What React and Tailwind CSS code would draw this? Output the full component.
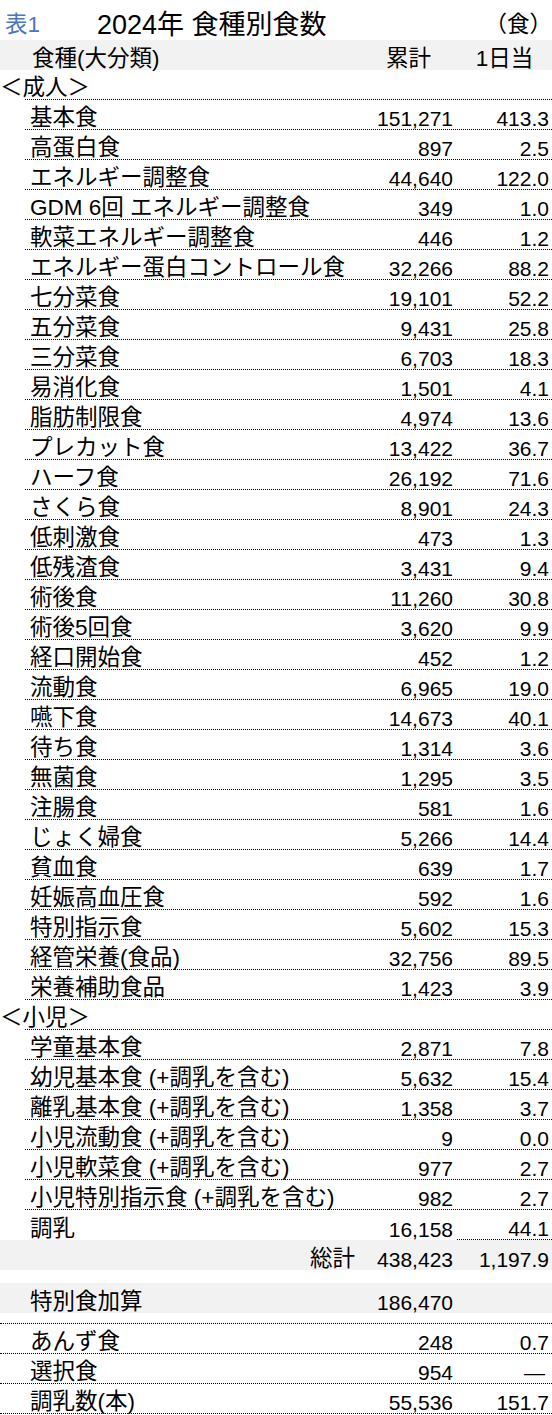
import React from 'react';

const adult = [
  ['基本食', '151,271', '413.3'],
  ['高蛋白食', '897', '2.5'],
  ['エネルギー調整食', '44,640', '122.0'],
  ['GDM 6回 エネルギー調整食', '349', '1.0'],
  ['軟菜エネルギー調整食', '446', '1.2'],
  ['エネルギー蛋白コントロール食', '32,266', '88.2'],
  ['七分菜食', '19,101', '52.2'],
  ['五分菜食', '9,431', '25.8'],
  ['三分菜食', '6,703', '18.3'],
  ['易消化食', '1,501', '4.1'],
  ['脂肪制限食', '4,974', '13.6'],
  ['プレカット食', '13,422', '36.7'],
  ['ハーフ食', '26,192', '71.6'],
  ['さくら食', '8,901', '24.3'],
  ['低刺激食', '473', '1.3'],
  ['低残渣食', '3,431', '9.4'],
  ['術後食', '11,260', '30.8'],
  ['術後5回食', '3,620', '9.9'],
  ['経口開始食', '452', '1.2'],
  ['流動食', '6,965', '19.0'],
  ['嚥下食', '14,673', '40.1'],
  ['待ち食', '1,314', '3.6'],
  ['無菌食', '1,295', '3.5'],
  ['注腸食', '581', '1.6'],
  ['じょく婦食', '5,266', '14.4'],
  ['貧血食', '639', '1.7'],
  ['妊娠高血圧食', '592', '1.6'],
  ['特別指示食', '5,602', '15.3'],
  ['経管栄養(食品)', '32,756', '89.5'],
  ['栄養補助食品', '1,423', '3.9'],
];

const child = [
  ['学童基本食', '2,871', '7.8'],
  ['幼児基本食 (+調乳を含む)', '5,632', '15.4'],
  ['離乳基本食 (+調乳を含む)', '1,358', '3.7'],
  ['小児流動食 (+調乳を含む)', '9', '0.0'],
  ['小児軟菜食 (+調乳を含む)', '977', '2.7'],
  ['小児特別指示食 (+調乳を含む)', '982', '2.7'],
];

const extra = [
  ['あんず食', '248', '0.7'],
  ['選択食', '954', '—'],
  ['調乳数(本)', '55,536', '151.7'],
];

function Row({ name, total, perDay, indent = true }) {
  return (
    <div
      className={`flex h-[30px] items-center border-b border-dotted border-black pt-[8px] ${indent ? 'ml-[25px] pl-[5px]' : 'pl-[30px]'}`}
    >
      <div className="flex-1 text-[22.5px] leading-none">{name}</div>
      <div className="w-[97px] pr-[4px] text-right text-[21px] leading-none">{total}</div>
      <div className={`w-[95px] text-right text-[21px] leading-none ${perDay === '—' ? 'pr-[7px]' : 'pr-[3px]'}`}>
        {perDay}
      </div>
    </div>
  );
}

function Section({ label }) {
  return (
    <div className="ml-[25px] flex h-[30px] items-center border-b border-dotted border-black pt-[8px]">
      <div className="-ml-[25px] text-[22.5px] leading-none">{label}</div>
    </div>
  );
}

export default function App() {
  return (
    <div className="w-[552px] bg-white text-black font-['Liberation_Sans','Noto_Sans_CJK_JP',sans-serif]">
      <div className="flex h-[40px] items-center pt-[11px]">
        <div className="w-[97px] pl-[5px] text-[22.5px] leading-none text-[#4a76c0]">表1</div>
        <div className="flex-1 text-[27px] leading-none">2024年 食種別食数</div>
        <div className="text-[22.5px] leading-none">（食）</div>
      </div>

      <div className="flex h-[30px] items-center bg-[#f2f2f2] pt-[8px]">
        <div className="flex-1 pl-[32px] text-[22.5px] leading-none">食種(大分類)</div>
        <div className="w-[97px] text-center text-[22.5px] leading-none">累計</div>
        <div className="w-[95px] text-center text-[22.5px] leading-none">1日当</div>
      </div>

      <Section label="＜成人＞" />
      {adult.map(([n, t, d]) => (
        <Row key={n} name={n} total={t} perDay={d} />
      ))}

      <Section label="＜小児＞" />
      {child.map(([n, t, d]) => (
        <Row key={n} name={n} total={t} perDay={d} />
      ))}
      <div className="ml-[25px] flex h-[30px] pl-[5px]">
        <div className="flex flex-1 items-center pt-[8px] text-[22.5px] leading-none">調乳</div>
        <div className="flex w-[97px] items-center justify-end pr-[4px] pt-[8px] text-[21px] leading-none">16,158</div>
        <div className="flex w-[95px] items-center justify-end border-b border-dotted border-black pr-[3px] pt-[8px] text-[21px] leading-none">
          44.1
        </div>
      </div>

      <div className="flex h-[30px] items-center bg-[#f2f2f2] pt-[8px]">
        <div className="flex-1 pr-[5px] text-right text-[22.5px] leading-none">総計</div>
        <div className="w-[97px] pr-[4px] text-right text-[21px] leading-none">438,423</div>
        <div className="w-[95px] pr-[3px] text-right text-[21px] leading-none">1,197.9</div>
      </div>

      <div className="h-[13px]" />
      <div className="flex h-[30px] items-center bg-[#f2f2f2] pt-[8px]">
        <div className="flex-1 pl-[30px] text-[22.5px] leading-none">特別食加算</div>
        <div className="w-[97px] pr-[4px] text-right text-[21px] leading-none">186,470</div>
        <div className="w-[95px]" />
      </div>

      <div className="h-[10px]" />
      <div className="border-t border-dotted border-black">
        {extra.map(([n, t, d]) => (
          <Row key={n} name={n} total={t} perDay={d} indent={false} />
        ))}
      </div>
    </div>
  );
}
